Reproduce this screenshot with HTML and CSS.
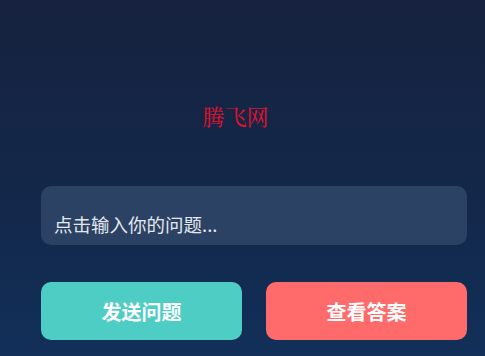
FILE: index.html
```html
<!DOCTYPE html>
<html lang="zh">

<head>
    <meta charset="UTF-8">
    <meta name="viewport" content="width=device-width, initial-scale=1.0">
    <title>腾飞网</title>
    <link rel="stylesheet" href="styles.css">
</head>

<body>
    <div class="container">
        <h1 class="logo">腾飞网</h1>
        <div class="question-box">
            <span class="placeholder">点击输入你的问题...</span>
        </div>
        <div class="actions">
            <button class="btn btn-send">发送问题</button>
            <button class="btn btn-answer">查看答案</button>
        </div>
    </div>
</body>

</html>
```

FILE: styles.css
```css
html,
body {
    height: 100%;
}

body {
    margin: 0;
    padding: 0;
    background: linear-gradient(to bottom, #16223f 0%, #13284b 60%, #12305a 100%);
    font-family: "Noto Sans CJK SC", "Noto Sans", sans-serif;
    overflow: hidden;
}

.container {
    padding: 0 18px 0 41px;
}

.logo {
    margin: 0 37px 0 0;
    padding-top: 102px;
    height: 186px;
    box-sizing: border-box;
    text-align: center;
    font-family: "Noto Serif CJK SC", "AR PL UMing CN", "Liberation Serif", serif;
    font-weight: normal;
    font-size: 22px;
    line-height: 28px;
    color: #e3112e;
}

.question-box {
    height: 59px;
    box-sizing: border-box;
    background-color: #2b4264;
    border-radius: 10px;
    padding: 25px 13px 0;
}

.placeholder {
    display: block;
    color: #e4e8ee;
    font-size: 18.5px;
    line-height: 26px;
}

.actions {
    display: flex;
    gap: 24px;
    margin-top: 37px;
}

.btn {
    flex: 1;
    height: 58px;
    border: none;
    border-radius: 10px;
    color: white;
    font-family: "Noto Sans CJK SC", "Noto Sans", sans-serif;
    font-size: 20px;
    font-weight: bold;
    cursor: pointer;
}

.btn-send {
    background-color: #4ecdc4;
}

.btn-answer {
    background-color: #ff6b6b;
}
```
